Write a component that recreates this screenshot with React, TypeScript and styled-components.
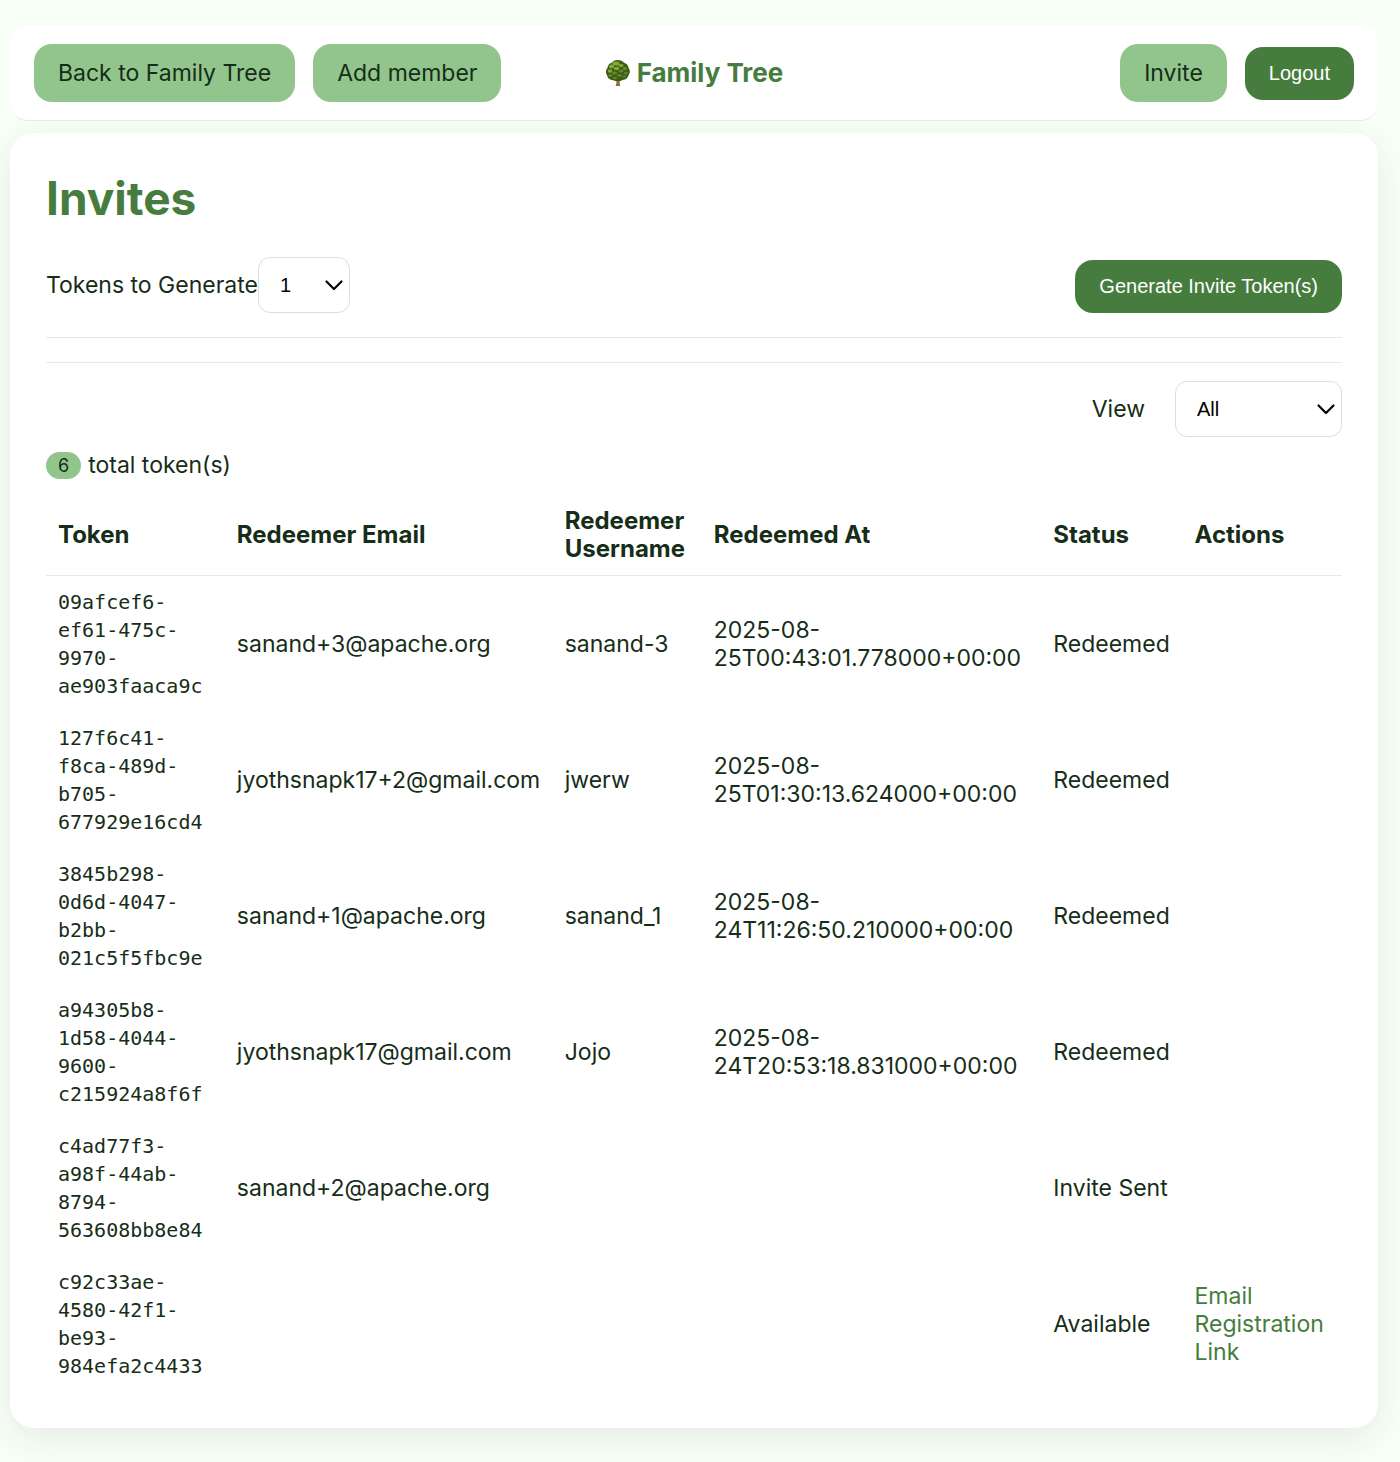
import React from "react";
import styled, { createGlobalStyle, css } from "styled-components";

const color = {
  page: "#f8fff7",
  text: "#162d18",
  primary: "#467c3e",
  soft: "#91c58c",
  line: "#e8e8e8",
  field: "#dddddd",
};
const sans = `Inter, "Liberation Sans", sans-serif`;
const control = `"Liberation Sans", Arial, sans-serif`;

const GlobalStyle = createGlobalStyle`
  *, *::before, *::after { box-sizing: border-box; }
  body {
    margin: 0;
    background: ${color.page};
    color: ${color.text};
    font-family: ${sans};
    font-size: 23px;
    line-height: 28px;
  }
`;

const Page = styled.div`
  min-height: 100vh;
  padding: 26px 22px 34px 10px;
  display: flex;
  flex-direction: column;
  gap: 12px;
`;

const Header = styled.header`
  display: grid;
  grid-template-columns: 1fr auto 1fr;
  align-items: center;
  padding: 18px 24px;
  background: #fff;
  border-bottom: 1px solid ${color.line};
  border-radius: 18px;
`;

const Nav = styled.nav<{ $end?: boolean }>`
  display: flex;
  align-items: center;
  justify-content: ${(p) => (p.$end ? "flex-end" : "flex-start")};
  gap: 18px;
`;

const NavLink = styled.a`
  padding: 15px 24px;
  border-radius: 18px;
  background: ${color.soft};
  color: ${color.text};
  text-decoration: none;
  white-space: nowrap;
`;

const Brand = styled.div`
  display: flex;
  align-items: center;
  gap: 6px;
  color: ${color.primary};
  font-size: 26px;
  font-weight: 700;
`;

const Button = styled.button`
  padding: 15px 24px;
  border: 0;
  border-radius: 18px;
  background: ${color.primary};
  color: #fff;
  font: 20px/23px ${control};
  cursor: pointer;
`;

const Card = styled.main`
  padding: 36px;
  border-radius: 24px;
  background: #fff;
  box-shadow: 0 10px 36px rgba(22, 45, 24, 0.09);
`;

const Title = styled.h1`
  margin: 0 0 30px;
  color: ${color.primary};
  font-size: 46px;
  line-height: 58px;
  font-weight: 700;
`;

const Toolbar = styled.form`
  display: flex;
  align-items: flex-end;
  justify-content: space-between;
`;

const Field = styled.div<{ $spaced?: boolean }>`
  display: flex;
  align-items: center;
  ${(p) =>
    p.$spaced &&
    css`
      justify-content: flex-end;
      gap: 30px;
    `}
`;

const SelectBox = styled.div<{ $width: number }>`
  position: relative;
  width: ${(p) => p.$width}px;
`;

const Select = styled.select`
  display: block;
  width: 100%;
  height: 56px;
  padding: 0 30px 0 21px;
  appearance: none;
  border: 1px solid ${color.field};
  border-radius: 12px;
  background: #fff;
  color: #000;
  font: 20px/24px ${control};
`;

const Chevron = styled.svg`
  position: absolute;
  right: 6px;
  top: 22px;
  width: 20px;
  height: 13px;
  pointer-events: none;
`;

const Rule = styled.hr`
  margin: 24px 0;
  border: 0;
  border-top: 1px solid ${color.line};
`;

const Filters = styled.section`
  margin-top: -6px;
`;

const Count = styled.p`
  display: flex;
  align-items: center;
  gap: 7px;
  margin: 14px 0 16px;
`;

const Badge = styled.span`
  padding: 2px 12px;
  border-radius: 14px;
  background: ${color.soft};
  font-size: 18px;
  line-height: 23px;
`;

const Table = styled.table`
  width: 100%;
  table-layout: fixed;
  border-collapse: collapse;
`;

const Column = styled.col<{ $share: number }>`
  width: ${(p) => p.$share}%;
`;

const Th = styled.th`
  padding: 12px;
  border-bottom: 1px solid ${color.line};
  text-align: left;
  font-size: 24px;
  font-weight: 700;
`;

const Td = styled.td`
  padding: 12px;
  vertical-align: middle;
`;

const Code = styled.code`
  display: block;
  font-family: "DejaVu Sans Mono", monospace;
  font-size: 20px;
  line-height: 28px;
`;

const ActionLink = styled.a`
  color: ${color.primary};
  text-decoration: none;
`;

const Tree = () => (
  <svg width="26" height="28" viewBox="0 0 26 28" aria-hidden="true">
    <path d="M11 19h4l-.5 4.500.8 3.500h-4.600l.8-3.500z" fill="#936844" />
    <path
      d="M12.500 1c3 0 5 1 6.500 2.800 2.500.7 4.300 2.500 4.500 5 1.800 2.200 1.800 5.200.2 7.200-.8 3-3 4.800-6 5-2.700 1.600-6.700 1.700-9.500.2-3.400-.1-5.700-2-6.200-4.900C.4 13.700.6 10.700 2.500 8.700 3 5.800 4.600 4.100 7 3.500 8.400 1.800 10.200 1 12.500 1z"
      fill="#3d5c17"
    />
    <g fill="#85a936">
      <ellipse cx="11" cy="4.500" rx="3.600" ry="2" />
      <ellipse cx="6.500" cy="7.500" rx="2.600" ry="1.900" />
      <ellipse cx="16" cy="6.500" rx="2.600" ry="1.600" />
      <ellipse cx="11.500" cy="9.500" rx="2.800" ry="1.700" />
      <ellipse cx="5" cy="12" rx="2.300" ry="1.700" />
    </g>
    <g fill="#648a28">
      <ellipse cx="20" cy="9.500" rx="2.200" ry="1.700" />
      <ellipse cx="16" cy="12" rx="2.500" ry="1.600" />
      <ellipse cx="9.500" cy="14" rx="2.600" ry="1.600" />
      <ellipse cx="21" cy="14" rx="1.800" ry="1.500" />
      <ellipse cx="5.500" cy="16.500" rx="2" ry="1.300" />
      <ellipse cx="14.500" cy="16.500" rx="2.400" ry="1.300" />
      <ellipse cx="19" cy="17.500" rx="1.800" ry="1.100" />
      <ellipse cx="10" cy="19" rx="2.200" ry="1" />
    </g>
  </svg>
);

const Arrow = () => (
  <Chevron viewBox="0 0 20 13" aria-hidden="true">
    <path
      d="M2.500 2.500 10 10l7.500-7.500"
      fill="none"
      stroke="#000"
      strokeWidth="2.200"
      strokeLinecap="round"
      strokeLinejoin="round"
    />
  </Chevron>
);

const columns = [
  { label: "Token", share: 13.8 },
  { label: "Redeemer Email", share: 25.3 },
  { label: "Redeemer Username", share: 11.5 },
  { label: "Redeemed At", share: 26.2 },
  { label: "Status", share: 10.9 },
  { label: "Actions", share: 12.3 },
];

type Invite = {
  token: string;
  email?: string;
  user?: string;
  at?: string;
  status: string;
};

const invites: Invite[] = [
  { token: "09afcef6-ef61-475c-9970-ae903faaca9c", email: "sanand+3@apache.org", user: "sanand-3", at: "2025-08-25T00:43:01.778000+00:00", status: "Redeemed" },
  { token: "127f6c41-f8ca-489d-b705-677929e16cd4", email: "jyothsnapk17+2@gmail.com", user: "jwerw", at: "2025-08-25T01:30:13.624000+00:00", status: "Redeemed" },
  { token: "3845b298-0d6d-4047-b2bb-021c5f5fbc9e", email: "sanand+1@apache.org", user: "sanand_1", at: "2025-08-24T11:26:50.210000+00:00", status: "Redeemed" },
  { token: "a94305b8-1d58-4044-9600-c215924a8f6f", email: "jyothsnapk17@gmail.com", user: "Jojo", at: "2025-08-24T20:53:18.831000+00:00", status: "Redeemed" },
  { token: "c4ad77f3-a98f-44ab-8794-563608bb8e84", email: "sanand+2@apache.org", status: "Invite Sent" },
  { token: "c92c33ae-4580-42f1-be93-984efa2c4433", status: "Available" },
];

export default function App() {
  return (
    <>
      <GlobalStyle />
      <Page>
        <Header>
          <Nav>
            <NavLink href="#tree">Back to Family Tree</NavLink>
            <NavLink href="#add">Add member</NavLink>
          </Nav>
          <Brand>
            <Tree />
            <span>Family Tree</span>
          </Brand>
          <Nav $end>
            <NavLink href="#invite">Invite</NavLink>
            <Button type="button">Logout</Button>
          </Nav>
        </Header>
        <Card>
          <Title>Invites</Title>
          <Toolbar onSubmit={(e) => e.preventDefault()}>
            <Field>
              <label htmlFor="count">Tokens to Generate</label>
              <SelectBox $width={92}>
                <Select id="count" defaultValue="1">
                  {[1, 2, 3, 4, 5].map((n) => (
                    <option key={n}>{n}</option>
                  ))}
                </Select>
                <Arrow />
              </SelectBox>
            </Field>
            <Button type="submit">Generate Invite Token(s)</Button>
          </Toolbar>
          <Rule />
          <Rule />
          <Filters>
            <Field $spaced>
              <label htmlFor="view">View</label>
              <SelectBox $width={167}>
                <Select id="view" defaultValue="All">
                  <option>All</option>
                  <option>Redeemed</option>
                  <option>Available</option>
                </Select>
                <Arrow />
              </SelectBox>
            </Field>
            <Count>
              <Badge>6</Badge>
              <span>total token(s)</span>
            </Count>
          </Filters>
          <Table>
            <colgroup>
              {columns.map((c) => (
                <Column key={c.label} $share={c.share} />
              ))}
            </colgroup>
            <thead>
              <tr>
                {columns.map((c) => (
                  <Th key={c.label} scope="col">
                    {c.label}
                  </Th>
                ))}
              </tr>
            </thead>
            <tbody>
              {invites.map((row) => (
                <tr key={row.token}>
                  <Td>
                    <Code>{row.token}</Code>
                  </Td>
                  <Td>{row.email}</Td>
                  <Td>{row.user}</Td>
                  <Td>{row.at}</Td>
                  <Td>{row.status}</Td>
                  <Td>
                    {row.status === "Available" && (
                      <ActionLink href="#email">Email Registration Link</ActionLink>
                    )}
                  </Td>
                </tr>
              ))}
            </tbody>
          </Table>
        </Card>
      </Page>
    </>
  );
}
